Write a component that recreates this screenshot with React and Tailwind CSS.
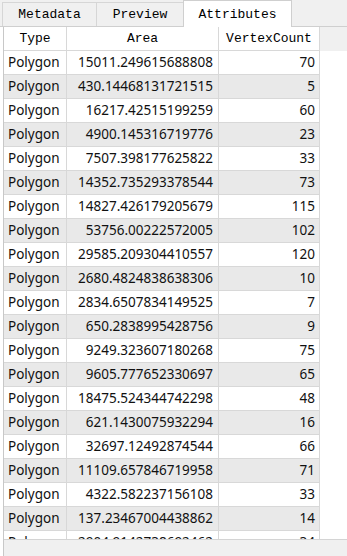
import React from 'react'

const rows = [
  ['15011.249615688808', '70'],
  ['430.14468131721515', '5'],
  ['16217.42515199259', '60'],
  ['4900.145316719776', '23'],
  ['7507.398177625822', '33'],
  ['14352.735293378544', '73'],
  ['14827.426179205679', '115'],
  ['53756.00222572005', '102'],
  ['29585.209304410557', '120'],
  ['2680.4824838638306', '10'],
  ['2834.6507834149525', '7'],
  ['650.2838995428756', '9'],
  ['9249.323607180268', '75'],
  ['9605.777652330697', '65'],
  ['18475.524344742298', '48'],
  ['621.1430075932294', '16'],
  ['32697.12492874544', '66'],
  ['11109.657846719958', '71'],
  ['4322.582237156108', '33'],
  ['137.23467004438862', '14'],
  ['2904.9142738692462', '34'],
]

const mono = "font-['Liberation_Mono',monospace] text-[13px] text-black"
const sans = "font-['Noto_Sans',sans-serif] text-[13.5px] text-[#111]"

const Tab = ({ label, active, width }) => (
  <div
    className={
      active
        ? `${width} h-[27px] bg-white border border-b-0 border-[#cfcfcf] flex items-center justify-center relative z-10`
        : `${width} h-[25px] mt-[2px] bg-[#f0f0f0] border border-r-0 border-[#d6d6d6] flex items-center justify-center`
    }
  >
    <span className={`${mono} leading-none`}>{label}</span>
  </div>
)

const App = () => {
  return (
    <div className="w-[347px] h-[556px] overflow-hidden bg-white flex flex-col">
      <div className="h-[27px] flex pl-[2px] bg-[#f0f0f0] relative">
        <Tab label="Metadata" width="w-[94px]" />
        <Tab label="Preview" width="w-[87px]" />
        <Tab label="Attributes" active width="w-[109px]" />
        <div className="absolute left-0 right-0 bottom-0 h-px bg-[#cfcfcf]" />
      </div>
      <div className="flex-1 flex flex-col ml-[3px] border-l border-[#c8c8c8] min-h-0">
        <div className="h-[521px] overflow-hidden">
          <div className="flex h-[24px] bg-[#f0f0f0]">
            <div className={`w-[63px] h-full bg-white border-r border-b border-[#d8d8d8] flex items-center justify-center ${mono}`}>Type</div>
            <div className={`w-[152px] h-full bg-white border-r border-b border-[#d8d8d8] flex items-center justify-center ${mono}`}>Area</div>
            <div className={`w-[101px] h-full bg-white border-r border-b border-[#d8d8d8] flex items-center justify-center ${mono}`}>VertexCount</div>
          </div>
          {rows.map(([area, count], i) => (
            <div key={i} className="flex h-[24px]">
              <div className={`w-[63px] h-full border-r border-b border-[#d8d8d8] flex items-center pl-[4px] ${i % 2 ? 'bg-[#e9e9e9]' : 'bg-white'} ${sans}`}>Polygon</div>
              <div className={`w-[152px] h-full border-r border-b border-[#d8d8d8] flex items-center justify-end pr-[5px] ${i % 2 ? 'bg-[#e9e9e9]' : 'bg-white'} ${sans}`}>{area}</div>
              <div className={`w-[101px] h-full border-r border-b border-[#d8d8d8] flex items-center justify-end pr-[4px] ${i % 2 ? 'bg-[#e9e9e9]' : 'bg-white'} ${sans}`}>{count}</div>
            </div>
          ))}
        </div>
        <div className="h-[17px] bg-[#f0f0f0] border-t border-[#d4d4d4]" />
      </div>
    </div>
  )
}

export default App
